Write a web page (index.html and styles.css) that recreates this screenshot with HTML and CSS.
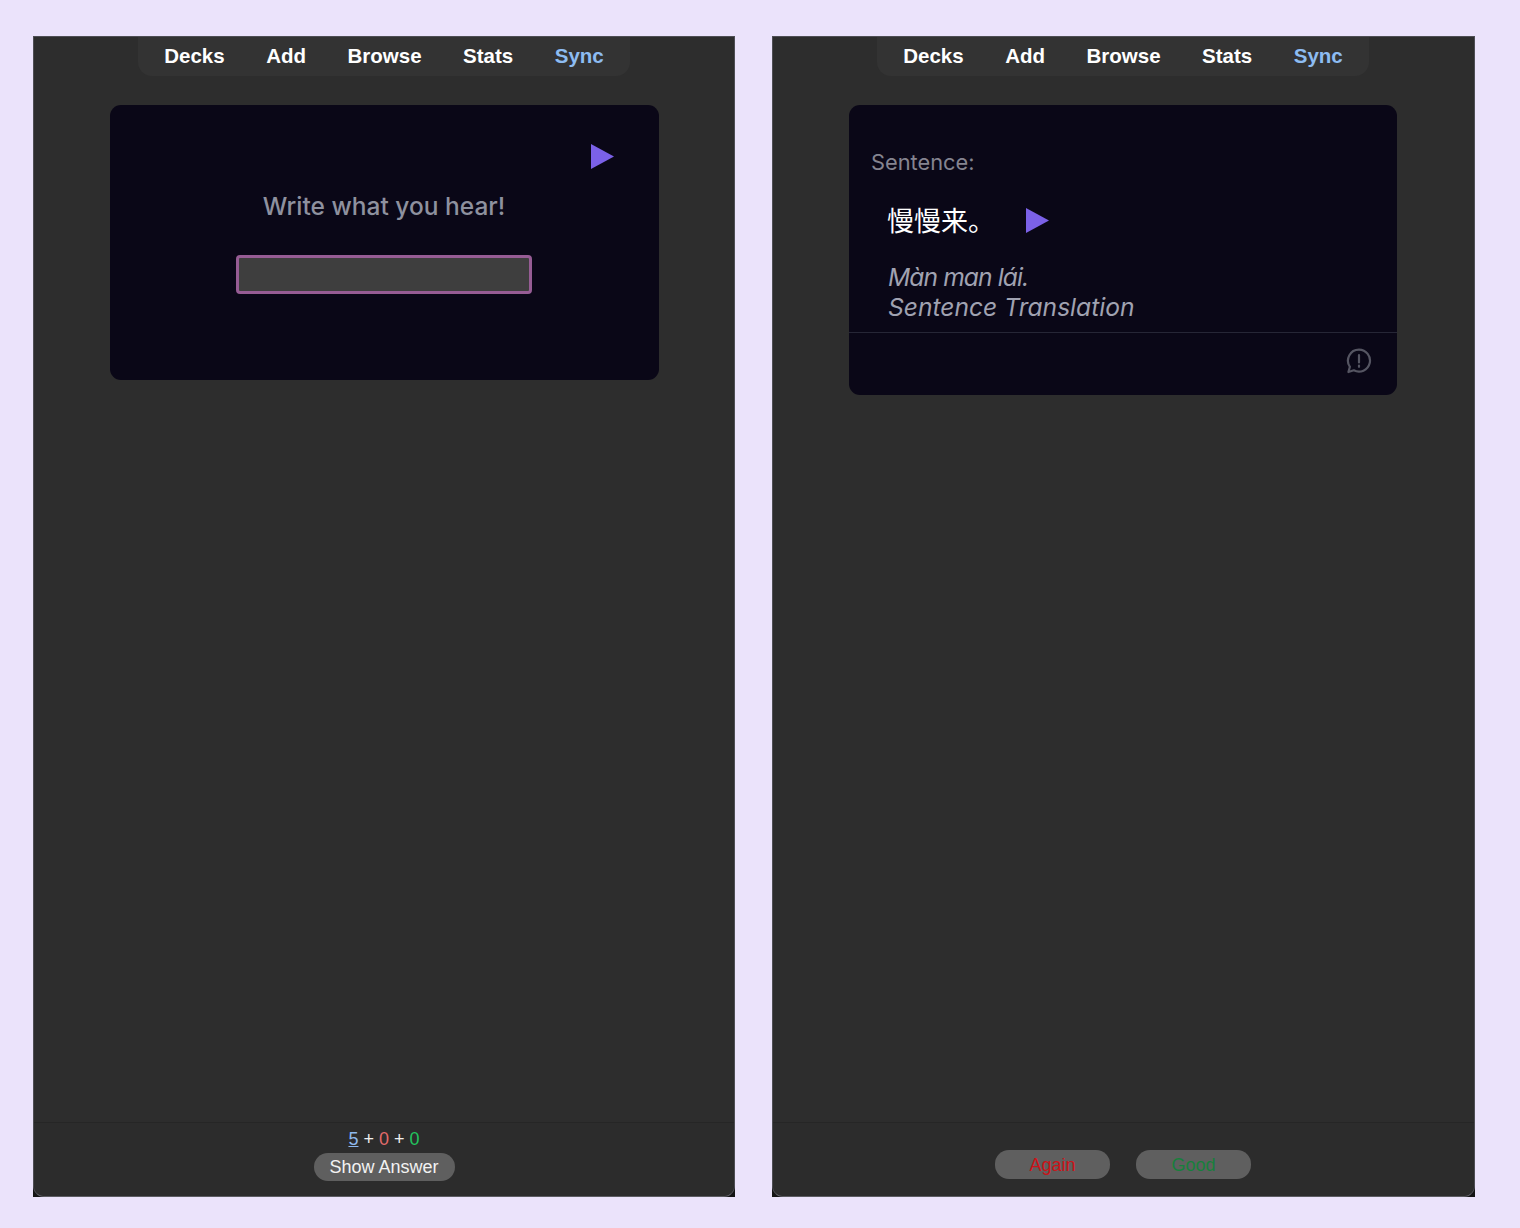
FILE: index.html
```html
<!DOCTYPE html>
<html lang="en">
<head>
<meta charset="utf-8">
<title>Anki cards</title>
<link rel="stylesheet" href="styles.css">
</head>
<body>
<div class="page">
  <section class="window">
    <div class="window-inner">
      <nav class="nav">
        <span class="nav-item">Decks</span><span class="nav-item">Add</span><span class="nav-item">Browse</span><span class="nav-item">Stats</span><span class="nav-item nav-sync">Sync</span>
      </nav>
      <main class="main">
        <div class="card card-front">
          <div class="play-row">
            <svg class="play" viewBox="0 0 23 25"><polygon points="0,0 23,12.5 0,25"/></svg>
          </div>
          <p class="prompt">Write what you hear!</p>
          <input class="answer" type="text" aria-label="Answer">
        </div>
      </main>
      <footer class="footer footer-front">
        <div class="counts"><span class="count-new">5</span> + <span class="count-learn">0</span> + <span class="count-review">0</span></div>
        <button class="btn btn-show">Show Answer</button>
      </footer>
    </div>
  </section>
  <section class="window">
    <div class="window-inner">
      <nav class="nav nav-back">
        <span class="nav-item">Decks</span><span class="nav-item">Add</span><span class="nav-item">Browse</span><span class="nav-item">Stats</span><span class="nav-item nav-sync">Sync</span>
      </nav>
      <main class="main">
        <div class="card card-back">
          <div class="card-body">
            <div class="label">Sentence:</div>
            <div class="sentence">
              <span class="hanzi">慢慢来。</span>
              <svg class="play" viewBox="0 0 23 25"><polygon points="0,0 23,12.5 0,25"/></svg>
            </div>
            <div class="notes"><span class="pinyin">Màn man lái.</span><br><span class="translation">Sentence Translation</span></div>
          </div>
          <div class="card-foot">
            <svg class="report" viewBox="0 0 26 26" fill="none"><path d="M13 1.6a11 11 0 1 1-5.2 20.7L2.4 24l1.5-5.2A11 11 0 0 1 13 1.6z"/><path d="M13 7v7.5M13 17.6v1.2"/></svg>
          </div>
        </div>
      </main>
      <footer class="footer footer-back">
        <button class="btn btn-grade btn-again">Again</button>
        <button class="btn btn-grade btn-good">Good</button>
      </footer>
    </div>
  </section>
</div>
</body>
</html>
```
FILE: styles.css
```css
* { box-sizing: border-box; }
html, body { margin: 0; padding: 0; }
body {
  background: #ebe3fb;
  font-family: "Liberation Sans", Arial, sans-serif;
}
.page {
  display: grid;
  grid-template-columns: 702px 703px;
  column-gap: 37px;
  height: 1228px;
  padding: 36px 0 31px 33px;
}
.window {
  display: flex;
  background: #141414;
}
.window-inner {
  flex: 1;
  display: flex;
  flex-direction: column;
  background: #2d2d2d;
  border: 1px solid #4e4e54;
  border-bottom-color: #5c5c62;
  border-radius: 0 0 11px 11px;
  overflow: hidden;
}
.nav {
  align-self: center;
  display: flex;
  gap: 41.5px;
  height: 39px;
  padding: 0 26px 2px 26px;
  align-items: center;
  background: #333333;
  border-radius: 0 0 14px 14px;
}
.nav-back { margin-right: 1px; }
.nav-item {
  font-size: 20.5px;
  font-weight: 700;
  color: #ffffff;
}
.nav-sync { color: #8dbcf2; }
.main {
  flex: 1;
  display: flex;
  flex-direction: column;
  align-items: center;
  padding-top: 29px;
}
.card {
  background: #0a0717;
  border-radius: 11px;
  font-family: Inter, "Noto Sans CJK SC", sans-serif;
}
.card-front {
  width: 549px;
  height: 275px;
  display: flex;
  flex-direction: column;
  align-items: center;
  padding-top: 39px;
}
.play-row {
  align-self: stretch;
  display: flex;
  justify-content: flex-end;
  padding-right: 45px;
}
.play {
  width: 23px;
  height: 25px;
  fill: #7b61e8;
  display: block;
}
.prompt {
  margin: 22px 0 0;
  font-size: 24.5px;
  font-weight: 500;
  line-height: 30px;
  color: #8e919f;
}
.answer {
  width: 296px;
  height: 39px;
  margin-top: 34px;
  background: #3e3e3e;
  border: 3px solid #965c94;
  border-radius: 4px;
  outline: none;
}
.card-back {
  width: 548px;
  height: 290px;
  margin-right: 1px;
  display: flex;
  flex-direction: column;
}
.card-body {
  height: 228px;
  padding: 44px 22px 0;
  border-bottom: 1px solid #262636;
}
.label {
  font-size: 21.8px;
  line-height: 26px;
  color: #858490;
}
.sentence {
  display: flex;
  align-items: center;
  gap: 31px;
  margin: 27px 0 0 16px;
  height: 36px;
}
.hanzi {
  font-family: "Noto Sans CJK SC", sans-serif;
  font-size: 27px;
  line-height: 36px;
  color: #ffffff;
  white-space: nowrap;
}
.notes {
  margin: 24px 0 0 17px;
  font-size: 24.6px;
  line-height: 30px;
  font-style: italic;
  color: #a0a2b1;
}
.pinyin { letter-spacing: -0.9px; }
.card-foot {
  flex: 1;
  display: flex;
  justify-content: flex-end;
  padding: 15px 25px 0 0;
}
.report {
  width: 26px;
  height: 26px;
  stroke: #555562;
  stroke-width: 2.2;
  stroke-linecap: round;
  stroke-linejoin: round;
}
.footer {
  height: 74px;
  background: #2c2c2c;
  border-top: 1px solid #262626;
  display: flex;
}
.footer-front {
  flex-direction: column;
  align-items: center;
  padding-top: 6px;
}
.footer-back {
  justify-content: center;
  gap: 26px;
  padding: 27px 1px 0 0;
}
.counts {
  font-size: 18px;
  line-height: 21px;
  color: #f0f0f0;
}
.count-new { color: #8fb9ee; text-decoration: underline; }
.count-learn { color: #e26a6a; }
.count-review { color: #22c35e; }
.btn {
  border: 0;
  padding: 0;
  background: #5f5f5f;
  border-radius: 14px;
  font-family: "Liberation Sans", Arial, sans-serif;
  font-size: 18px;
  line-height: 20px;
}
.btn-show {
  width: 141px;
  height: 28px;
  margin-top: 3px;
  color: #f2f2f2;
}
.btn-grade { width: 115px; height: 29px; }
.btn-again { color: #cc1218; }
.btn-good { color: #177f3c; }
```
